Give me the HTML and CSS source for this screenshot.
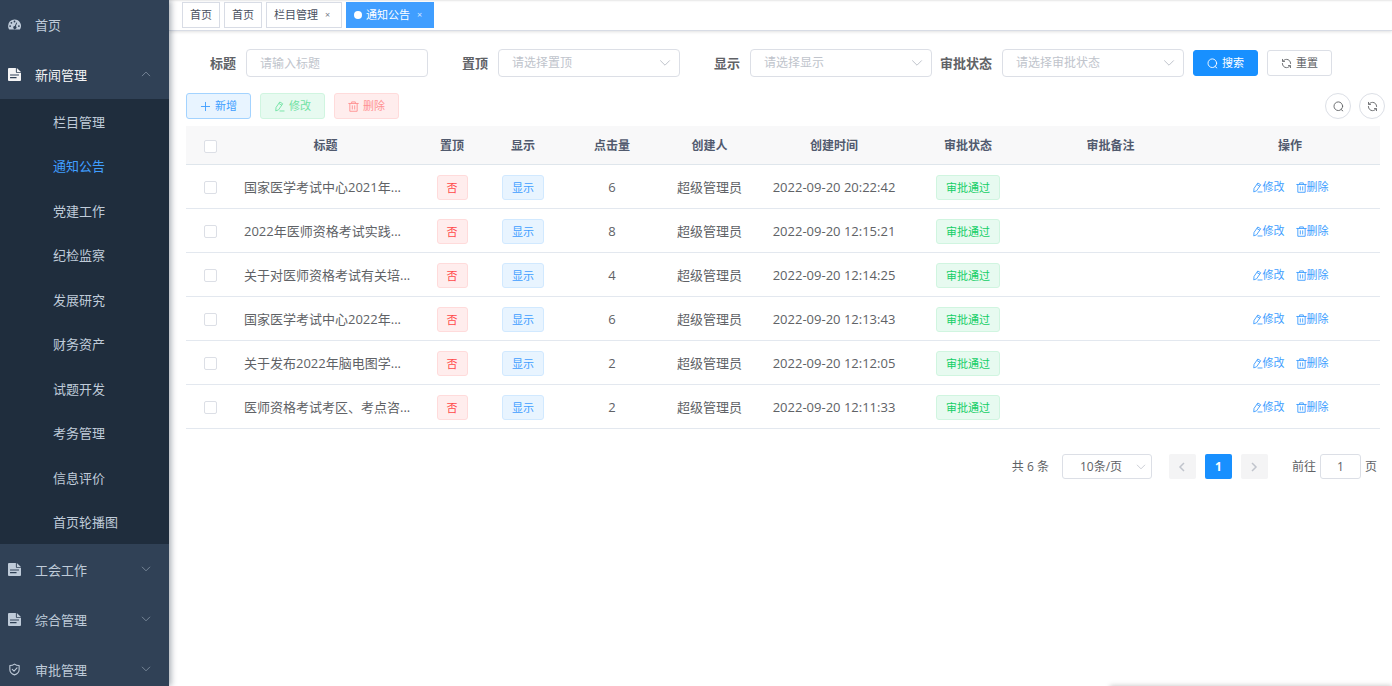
FILE: index.html
```html
<!DOCTYPE html>
<html lang="zh-CN">
<head>
<meta charset="utf-8">
<title>通知公告</title>
<link rel="stylesheet" href="styles.css">
</head>
<body>
<svg class="sprite" aria-hidden="true">
  <symbol id="i-dash" viewBox="0 0 16 16"><path fill="currentColor" fill-rule="evenodd" d="M8 1.800a7.900 7.900 0 0 0-7.900 7.900c0 1.500.4 2.900 1.100 4.100.2.300.4.400.7.400h12.200c.3 0 .5-.1.7-.4a7.900 7.900 0 0 0-6.800-12zM8 3.200a1.100 1.100 0 1 1 0 2.200 1.100 1.100 0 0 1 0-2.200zM4.200 4.800a1.100 1.100 0 1 1 0 2.200 1.100 1.100 0 0 1 0-2.200zM2.600 8.800a1.100 1.100 0 1 1 0 2.200 1.100 1.100 0 0 1 0-2.200zM13.400 8.800a1.100 1.100 0 1 1 0 2.200 1.100 1.100 0 0 1 0-2.200zM10.300 5.500l1 .4-1.700 4.400a1.900 1.900 0 1 1-1.200-.4z"/></symbol>
  <symbol id="i-doc" viewBox="0 0 14 14"><path fill="currentColor" fill-rule="evenodd" d="M1 0H8.500V4.200c0 .6.400 1 1 1H14V13c0 .6-.4 1-1 1H1c-.6 0-1-.4-1-1V1c0-.6.400-1 1-1zM9.500 0L14 4.200H9.500zM2.200 7v1.200h9.600V7zM2.200 9.800V11h7V9.800z"/></symbol>
  <symbol id="i-shield" viewBox="0 0 14 14"><path fill="none" stroke="currentColor" stroke-width="1.200" stroke-linejoin="round" stroke-linecap="round" d="M7 1.200c1.500 1.100 3.200 1.500 5 1.500v4.500c0 2.600-2 4.500-5 5.600-3-1.100-5-3-5-5.600V2.700c1.800 0 3.500-.4 5-1.500zM4.600 6.800l1.900 1.900 3.200-3.400"/></symbol>
  <symbol id="i-down" viewBox="0 0 12 12"><path fill="none" stroke="currentColor" stroke-linecap="round" stroke-linejoin="round" d="M1.500 3.700L6 8.200l4.500-4.500"/></symbol>
  <symbol id="i-up" viewBox="0 0 12 12"><path fill="none" stroke="currentColor" stroke-linecap="round" stroke-linejoin="round" d="M1.500 8.200L6 3.700l4.500 4.500"/></symbol>
  <symbol id="i-left" viewBox="0 0 12 12"><path fill="none" stroke="currentColor" stroke-width="1.500" d="M8 2L4 6l4 4"/></symbol>
  <symbol id="i-right" viewBox="0 0 12 12"><path fill="none" stroke="currentColor" stroke-width="1.500" d="M4 2l4 4-4 4"/></symbol>
  <symbol id="i-plus" viewBox="0 0 12 12"><path fill="none" stroke="currentColor" stroke-linecap="round" d="M6 1.500v9M1.500 6h9"/></symbol>
  <symbol id="i-edit" viewBox="0 0 12 12"><path fill="none" stroke="currentColor" stroke-linejoin="round" stroke-linecap="round" d="M6.700 1.300l2.800 1.700-4.500 6.600-3.100 1.200.3-3.400zM5.700 2.900l2.700 1.700M6.500 10.900h4.500"/></symbol>
  <symbol id="i-trash" viewBox="0 0 12 12"><path fill="none" stroke="currentColor" stroke-linejoin="round" stroke-linecap="round" d="M.8 2.700h10.400M4 2.500V1h4v1.500M2 2.700v8.500h8V2.700M4.700 5.200v3.600M7.300 5.200v3.600"/></symbol>
  <symbol id="i-search" viewBox="0 0 12 12"><path fill="none" stroke="currentColor" stroke-linecap="round" d="M10.500 5.700a4.700 4.700 0 1 1-9.400 0 4.700 4.700 0 0 1 9.400 0zM8.900 9.300l1.800 1.500"/></symbol>
  <symbol id="i-refresh" viewBox="0 0 12 12"><path fill="none" stroke="currentColor" stroke-linecap="round" stroke-linejoin="round" d="M1.700 1.500v2.200h2.200M2.200 3.500C3.200 2.200 4.500 1.500 6 1.500c2.500 0 4.500 1.900 4.500 4.500M10.300 10.500V8.300H8.100M9.800 8.500C8.800 9.800 7.500 10.500 6 10.500 3.500 10.500 1.500 8.600 1.500 6"/></symbol>
</svg>

<div class="app">
  <nav class="sidebar">
    <a class="menu menu-home" href="#"><svg class="menu-icon"><use href="#i-dash"/></svg><span>首页</span></a>
    <a class="menu menu-open" href="#"><svg class="menu-icon"><use href="#i-doc"/></svg><span>新闻管理</span><svg class="menu-arrow"><use href="#i-up"/></svg></a>
    <div class="submenu">
      <a href="#"><span>栏目管理</span></a>
      <a class="active" href="#"><span>通知公告</span></a>
      <a href="#"><span>党建工作</span></a>
      <a href="#"><span>纪检监察</span></a>
      <a href="#"><span>发展研究</span></a>
      <a href="#"><span>财务资产</span></a>
      <a href="#"><span>试题开发</span></a>
      <a href="#"><span>考务管理</span></a>
      <a href="#"><span>信息评价</span></a>
      <a href="#"><span>首页轮播图</span></a>
    </div>
    <a class="menu" href="#"><svg class="menu-icon"><use href="#i-doc"/></svg><span>工会工作</span><svg class="menu-arrow"><use href="#i-down"/></svg></a>
    <a class="menu" href="#"><svg class="menu-icon"><use href="#i-doc"/></svg><span>综合管理</span><svg class="menu-arrow"><use href="#i-down"/></svg></a>
    <a class="menu" href="#"><svg class="menu-icon"><use href="#i-shield"/></svg><span>审批管理</span><svg class="menu-arrow"><use href="#i-down"/></svg></a>
  </nav>

  <div class="page">
    <header class="tabs">
      <a class="tab" href="#">首页</a>
      <a class="tab" href="#">首页</a>
      <a class="tab" href="#">栏目管理<span class="tab-close">×</span></a>
      <a class="tab tab-active" href="#"><i class="dot"></i>通知公告<span class="tab-close">×</span></a>
    </header>

    <main class="content">
      <form class="filters">
        <div class="fields">
          <div class="field"><label for="f-title">标题</label><input class="control" id="f-title" type="text" placeholder="请输入标题"></div>
          <div class="field"><label for="f-top">置顶</label><div class="select"><select class="control" id="f-top"><option>请选择置顶</option></select><svg><use href="#i-down"/></svg></div></div>
          <div class="field"><label for="f-show">显示</label><div class="select"><select class="control" id="f-show"><option>请选择显示</option></select><svg><use href="#i-down"/></svg></div></div>
          <div class="field"><label for="f-state">审批状态</label><div class="select"><select class="control" id="f-state"><option>请选择审批状态</option></select><svg><use href="#i-down"/></svg></div></div>
        </div>
        <button class="btn btn-search" type="button"><svg><use href="#i-search"/></svg>搜索</button>
        <button class="btn" type="button"><svg><use href="#i-refresh"/></svg>重置</button>
      </form>

      <div class="toolbar">
        <button class="btn btn-add" type="button"><svg><use href="#i-plus"/></svg>新增</button>
        <button class="btn btn-edit" type="button" disabled><svg><use href="#i-edit"/></svg>修改</button>
        <button class="btn btn-del" type="button" disabled><svg><use href="#i-trash"/></svg>删除</button>
        <div class="tools">
          <button class="round" type="button" aria-label="搜索"><svg><use href="#i-search"/></svg></button>
          <button class="round" type="button" aria-label="刷新"><svg><use href="#i-refresh"/></svg></button>
        </div>
      </div>

      <div class="list">
        <table class="table">
          <colgroup><col class="c-check"><col class="c-title"><col class="c-top"><col class="c-show"><col class="c-hits"><col class="c-user"><col class="c-time"><col class="c-state"><col class="c-note"><col class="c-ops"></colgroup>
          <thead>
            <tr><th><input type="checkbox" aria-label="全选"></th><th>标题</th><th>置顶</th><th>显示</th><th>点击量</th><th>创建人</th><th>创建时间</th><th>审批状态</th><th>审批备注</th><th>操作</th></tr>
          </thead>
          <tbody>
            <tr><td><input type="checkbox" aria-label="选择"></td><td class="title">国家医学考试中心2021年...</td><td><span class="tag tag-red">否</span></td><td><span class="tag tag-blue">显示</span></td><td>6</td><td>超级管理员</td><td>2022-09-20 20:22:42</td><td><span class="tag tag-green">审批通过</span></td><td></td><td><div class="ops"><a href="#"><svg><use href="#i-edit"/></svg>修改</a><a href="#"><svg><use href="#i-trash"/></svg>删除</a></div></td></tr>
            <tr><td><input type="checkbox" aria-label="选择"></td><td class="title">2022年医师资格考试实践...</td><td><span class="tag tag-red">否</span></td><td><span class="tag tag-blue">显示</span></td><td>8</td><td>超级管理员</td><td>2022-09-20 12:15:21</td><td><span class="tag tag-green">审批通过</span></td><td></td><td><div class="ops"><a href="#"><svg><use href="#i-edit"/></svg>修改</a><a href="#"><svg><use href="#i-trash"/></svg>删除</a></div></td></tr>
            <tr><td><input type="checkbox" aria-label="选择"></td><td class="title">关于对医师资格考试有关培...</td><td><span class="tag tag-red">否</span></td><td><span class="tag tag-blue">显示</span></td><td>4</td><td>超级管理员</td><td>2022-09-20 12:14:25</td><td><span class="tag tag-green">审批通过</span></td><td></td><td><div class="ops"><a href="#"><svg><use href="#i-edit"/></svg>修改</a><a href="#"><svg><use href="#i-trash"/></svg>删除</a></div></td></tr>
            <tr><td><input type="checkbox" aria-label="选择"></td><td class="title">国家医学考试中心2022年...</td><td><span class="tag tag-red">否</span></td><td><span class="tag tag-blue">显示</span></td><td>6</td><td>超级管理员</td><td>2022-09-20 12:13:43</td><td><span class="tag tag-green">审批通过</span></td><td></td><td><div class="ops"><a href="#"><svg><use href="#i-edit"/></svg>修改</a><a href="#"><svg><use href="#i-trash"/></svg>删除</a></div></td></tr>
            <tr><td><input type="checkbox" aria-label="选择"></td><td class="title">关于发布2022年脑电图学...</td><td><span class="tag tag-red">否</span></td><td><span class="tag tag-blue">显示</span></td><td>2</td><td>超级管理员</td><td>2022-09-20 12:12:05</td><td><span class="tag tag-green">审批通过</span></td><td></td><td><div class="ops"><a href="#"><svg><use href="#i-edit"/></svg>修改</a><a href="#"><svg><use href="#i-trash"/></svg>删除</a></div></td></tr>
            <tr><td><input type="checkbox" aria-label="选择"></td><td class="title">医师资格考试考区、考点咨...</td><td><span class="tag tag-red">否</span></td><td><span class="tag tag-blue">显示</span></td><td>2</td><td>超级管理员</td><td>2022-09-20 12:11:33</td><td><span class="tag tag-green">审批通过</span></td><td></td><td><div class="ops"><a href="#"><svg><use href="#i-edit"/></svg>修改</a><a href="#"><svg><use href="#i-trash"/></svg>删除</a></div></td></tr>
          </tbody>
        </table>

        <div class="pagination">
          <span>共 6 条</span>
          <div class="select page-size"><select class="control" aria-label="每页条数"><option>10条/页</option></select><svg><use href="#i-down"/></svg></div>
          <div class="pager">
            <button class="page-btn" type="button" aria-label="上一页" disabled><svg><use href="#i-left"/></svg></button>
            <button class="page-btn page-current" type="button">1</button>
            <button class="page-btn" type="button" aria-label="下一页" disabled><svg><use href="#i-right"/></svg></button>
          </div>
          <div class="jump"><label for="jump">前往</label><input class="control" id="jump" type="text" value="1"><span>页</span></div>
        </div>
      </div>
    </main>
  </div>
</div>
<div class="toast-edge"></div>
</body>
</html>
```
FILE: styles.css
```css
* { box-sizing: border-box; }

body {
  margin: 0;
  background: #fff;
  color: #606266;
  font: 12px/16px "Open Sans", "Noto Sans CJK SC", sans-serif;
}

a { color: inherit; text-decoration: none; }
button, input, select { font: inherit; color: inherit; margin: 0; }
svg { display: block; width: 12px; height: 12px; flex: none; }
.sprite { position: absolute; width: 0; height: 0; }

.app { display: flex; height: 100vh; overflow: hidden; }

/* Sidebar */
.sidebar {
  position: relative;
  z-index: 1;
  flex: none;
  width: 169px;
  overflow: hidden;
  background: #304156;
  box-shadow: 2px 0 6px rgba(0, 21, 41, .35);
  color: #bfcbd9;
  font-size: 13px;
}
.sidebar span { padding-top: 1px; }
.menu {
  display: flex;
  align-items: center;
  height: 50px;
  padding: 0 18px 0 8px;
}
.menu-home { height: 49px; }
.menu-icon { width: 13px; height: 13px; margin-right: 14px; }
.menu-arrow { width: 10px; height: 10px; margin-left: auto; color: #8391a2; }
.menu-open { color: #f4f4f5; }
.submenu {
  display: grid;
  grid-auto-rows: 1fr;
  min-height: 445px;
  background: #1f2d3d;
}
.submenu a { display: flex; align-items: center; padding-left: 53px; }
.submenu .active { color: #409eff; }

/* Open page tabs */
.page { flex: 1; min-width: 0; }
.tabs {
  display: flex;
  gap: 4px;
  padding: 2px 13px;
  height: 31px;
  border-bottom: 1px solid #d8dce5;
  box-shadow: 0 1px 3px rgba(0, 0, 0, .12), inset 0 2px 2px -1px rgba(0, 0, 0, .1);
}
.tab {
  display: flex;
  align-items: center;
  height: 26px;
  padding: 0 7px;
  border: 1px solid #d8dce5;
  background: #fff;
  color: #495060;
  font-size: 11px;
}
.tab-close { width: 13px; margin-left: 3px; text-align: center; font-size: 9px; opacity: .75; }
.tab-active { border-color: #409eff; background: #409eff; color: #fff; }
.dot { width: 8px; height: 8px; margin-right: 4px; border-radius: 50%; background: #fff; }

/* Filters */
.content { padding: 18px 7px 0 17px; }
.filters { display: flex; align-items: center; gap: 9px; }
.fields { display: flex; gap: 10px; }
.field { display: flex; align-items: center; }
.field label {
  display: flex;
  justify-content: flex-end;
  width: 60px;
  padding-right: 10px;
  white-space: nowrap;
  font-size: 13px;
  font-weight: 700;
}
.control {
  display: block;
  width: 182px;
  height: 28px;
  padding: 0 13px;
  border: 1px solid #dcdfe6;
  border-radius: 4px;
  background: #fff;
  outline: none;
  appearance: none;
}
.control::placeholder { color: #c0c4cc; opacity: 1; }
.select { position: relative; color: #c0c4cc; }
.select svg { position: absolute; right: 9px; top: 50%; margin-top: -6px; pointer-events: none; }

/* Buttons */
.btn {
  display: flex;
  align-items: center;
  justify-content: center;
  gap: 4px;
  width: 65px;
  height: 26px;
  padding: 0;
  border: 1px solid #dcdfe6;
  border-radius: 3px;
  background: #fff;
  font-size: 11px;
}
.btn-search { border-color: #1890ff; background: #1890ff; color: #fff; }
.btn-add { border-color: #a3d3ff; background: #e8f4ff; color: #409eff; }
.btn-edit { border-color: #d0f5e0; background: #e7faf0; color: #71e2a3; }
.btn-del { border-color: #ffdbdb; background: #ffeded; color: #ff9292; }
.toolbar { display: flex; align-items: center; gap: 9px; margin: 16px 0 7px; }
.tools { display: flex; gap: 8px; margin-left: auto; }
.round {
  display: flex;
  align-items: center;
  justify-content: center;
  width: 26px;
  height: 26px;
  padding: 0;
  border: 1px solid #dcdfe6;
  border-radius: 50%;
  background: #fff;
}
.btn svg, .round svg { width: 11px; height: 11px; }

/* Table */
.list { padding-right: 5px; }
.table {
  width: 100%;
  table-layout: fixed;
  border-collapse: separate;
  border-spacing: 0;
  text-align: center;
  font-size: 13px;
}
.c-check { width: 49px; }
.c-title { width: 181px; }
.c-top { width: 72px; }
.c-show { width: 70px; }
.c-hits { width: 108px; }
.c-user { width: 87px; }
.c-time { width: 162px; }
.c-state { width: 106px; }
.c-note { width: 179px; }
.c-ops { width: 180px; }
.table th {
  height: 39px;
  padding: 2px 0 0;
  border-bottom: 1px solid #dfe6ec;
  background: #f8f8f9;
  color: #515a6e;
  font-size: 12px;
}
.table td { height: 44px; padding: 1px 0 0; border-bottom: 1px solid #e3e8ef; white-space: nowrap; }
.table .title { padding-left: 9px; text-align: left; }
.table input {
  display: block;
  width: 13px;
  height: 13px;
  margin: 0 auto;
  border: 1px solid #dcdfe6;
  border-radius: 2px;
  background: #fff;
  appearance: none;
}
.tag {
  display: inline-block;
  height: 25px;
  padding: 0 9px;
  border: 1px solid;
  border-radius: 3px;
  vertical-align: middle;
  font-size: 11px;
  line-height: 23px;
}
.tag-red { border-color: #ffdbdb; background: #ffeded; color: #ff4949; }
.tag-blue { border-color: #d1e9ff; background: #e8f4ff; color: #409eff; }
.tag-green { border-color: #d0f5e0; background: #e7faf0; color: #13ce66; }
.ops { display: flex; justify-content: center; gap: 11px; color: #409eff; font-size: 11px; }
.ops a { display: flex; align-items: center; }
.ops svg { width: 11px; height: 11px; }

/* Pagination */
.pagination {
  display: flex;
  align-items: center;
  justify-content: flex-end;
  padding: 25px 3px 0 0;
}
.pagination .control { height: 25px; border-radius: 3px; }
.page-size { margin: 0 17px 0 13px; color: #606266; }
.page-size .control { width: 90px; padding: 0 17px; }
.page-size svg { width: 10px; height: 10px; right: 6px; margin-top: -5px; color: #c0c4cc; }
.pager { display: flex; gap: 9px; margin-right: 24px; }
.page-btn {
  display: flex;
  align-items: center;
  justify-content: center;
  width: 27px;
  height: 25px;
  padding: 0;
  border: 0;
  border-radius: 2px;
  background: #f4f4f5;
  color: #c0c4cc;
}
.page-current { background: #1890ff; color: #fff; font-weight: 700; }
.jump { display: flex; align-items: center; gap: 4px; }
.jump .control { width: 41px; padding: 0; text-align: center; }

/* Top edge of the notice parked under the window */
.toast-edge {
  position: fixed;
  right: 0;
  bottom: -20px;
  width: 282px;
  height: 20px;
  box-shadow: 0 0 5px rgba(0, 0, 0, .25);
}
```
